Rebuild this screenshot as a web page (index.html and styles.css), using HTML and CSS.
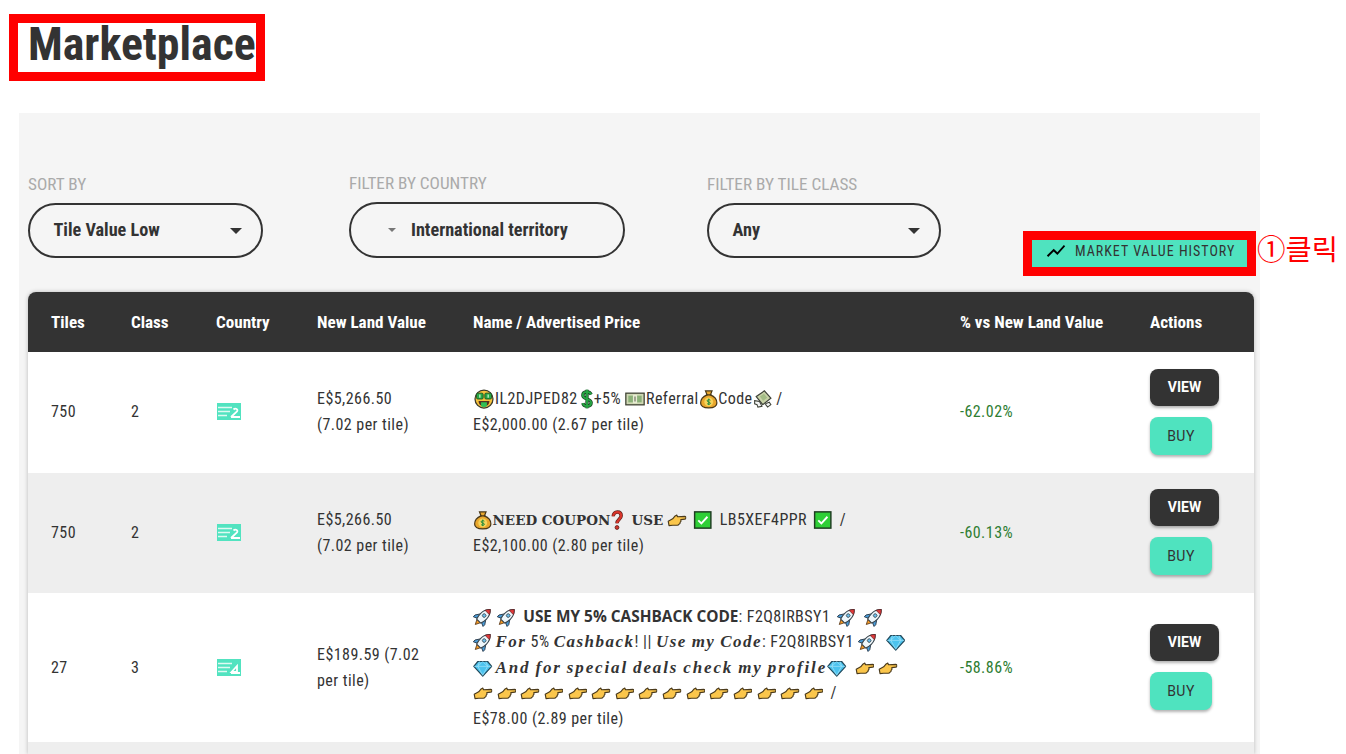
FILE: index.html
```html
<!DOCTYPE html>
<html lang="en">
<head>
<meta charset="utf-8">
<title>Marketplace</title>
<link rel="stylesheet" href="styles.css">
</head>
<body>
<svg class="defs" width="0" height="0" aria-hidden="true">
  <symbol id="flag2" viewBox="0 0 24 17"><rect width="24" height="17" fill="#52e3c0"/><path d="M1 4.500h14M1 8.500h12M1 12.500h9" stroke="#dffaf2" stroke-width="1.300"/><path d="M14 14l6-5.500c1.500-2-1.500-4-3.500-2M14 14h9" stroke="#fff" stroke-width="1.800" fill="none"/></symbol>
  <symbol id="flag3" viewBox="0 0 24 17"><rect width="24" height="17" fill="#52e3c0"/><path d="M1 4.500h14M1 8.500h12M1 12.500h9" stroke="#dffaf2" stroke-width="1.300"/><path d="M14.500 13l5.500-6v6zM14 14h9" stroke="#fff" stroke-width="1.800" fill="none"/></symbol>
  <symbol id="face" viewBox="0 0 24 24"><circle cx="12" cy="12" r="10.800" fill="#f7c23c" stroke="#3a3a2a" stroke-width="1.500"/><rect x="3" y="5" width="8" height="7" rx="1.500" fill="#27a844" stroke="#174d22"/><rect x="13" y="5" width="8" height="7" rx="1.500" fill="#27a844" stroke="#174d22"/><path d="M7 6.500v4M17 6.500v4" stroke="#bff0c8" stroke-width="1.600"/><path d="M5.500 14.500h13c0 4-3 6.500-6.500 6.500s-6.500-2.500-6.500-6.500z" fill="#54301f"/><path d="M8.500 16h7v4.500c-1 1.500-6 1.500-7 0z" fill="#2fbf55"/></symbol>
  <symbol id="dollar" viewBox="0 0 14 24"><path d="M12 6.500C11 4.500 9.500 3.500 7 3.500 4 3.500 2 5 2 7.500c0 5.500 10 3.500 10 9 0 2.500-2 4-5 4-2.500 0-4.500-1-5-3.500M7 .8v22.400" fill="none" stroke="#1b4a26" stroke-width="4"/><path d="M12 6.500C11 4.500 9.500 3.500 7 3.500 4 3.500 2 5 2 7.500c0 5.500 10 3.500 10 9 0 2.500-2 4-5 4-2.500 0-4.500-1-5-3.500M7 .8v22.400" fill="none" stroke="#27a844" stroke-width="2.200"/></symbol>
  <symbol id="note" viewBox="0 0 24 24"><rect x="1" y="5" width="22" height="14" fill="#cfd8b4" stroke="#3c4030" stroke-width="1.500"/><rect x="4" y="8" width="16" height="8" fill="#8bb178"/><rect x="9.500" y="7" width="5" height="10" fill="#e8edd4"/><path d="M12 9v6" stroke="#3c4030"/></symbol>
  <symbol id="bag" viewBox="0 0 24 24"><path d="M8 2h8l-2 5c5 2 8 6 8 10 0 4-4 6-10 6S2 21 2 17c0-4 3-8 8-10z" fill="#e9a72c" stroke="#4a3818" stroke-width="1.500"/><path d="M8.500 7h7" stroke="#4a3818" stroke-width="1.500"/><circle cx="12" cy="15.500" r="5.500" fill="#f6d35a"/><path d="M14 13.500c-1-1-4-1-4 .8s4 1 4 3c0 1.500-3 1.500-4 .4M12 11.500v8" stroke="#1f8a3c" stroke-width="1.200" fill="none"/></symbol>
  <symbol id="fly" viewBox="0 0 24 24"><path d="M4 9l10-7 8 9-10 8z" fill="#c8d2a8" stroke="#40443a" stroke-width="1.500"/><path d="M8.500 9l5-3.500 4 5-5 3.500z" fill="#a3bc86"/><path d="M2 14l6 1 3 6-5 1-1-3-3-1zM15 18l5-2 2 3-4 3z" fill="#f4f5f5" stroke="#40443a" stroke-width="1.300"/></symbol>
  <symbol id="question" viewBox="0 0 14 24"><path d="M2.500 7.500C2.500 4.500 4.500 2.500 7.500 2.500s4.500 2 4.500 4.500c0 4-5 4.500-5 9" fill="none" stroke="#5a1f1a" stroke-width="4.200"/><path d="M2.500 7.500C2.500 4.500 4.500 2.500 7.500 2.500s4.500 2 4.500 4.500c0 4-5 4.500-5 9" fill="none" stroke="#d8352a" stroke-width="2.600"/><circle cx="7" cy="21" r="2.300" fill="#d8352a" stroke="#5a1f1a"/></symbol>
  <symbol id="hand" viewBox="0 0 24 24"><path d="M1.500 13.500 7 10.500 10 7l2-1 1 2 9-.5c1.700.1 1.700 3.200 0 3.400l-5 .6c.5 1.500.3 2.600-.8 3.200.2 1.300-.4 2.200-1.500 2.500-.4 1-1.200 1.300-2.200 1.300H7l-4.500.5z" fill="#fbc64b" stroke="#4a3a1c" stroke-width="1.400" stroke-linejoin="round"/></symbol>
  <symbol id="check" viewBox="0 0 24 24"><rect x="2" y="2" width="20" height="20" fill="#2fcf37" stroke="#1f3d22" stroke-width="1.800"/><path d="M6.500 12.500l3.800 3.800 7.500-8.300" fill="none" stroke="#fff" stroke-width="2.300"/></symbol>
  <symbol id="rocket" viewBox="0 0 24 24"><g transform="rotate(45 12 12)"><path d="M9 19h6l-3 6z" fill="#f49a25" stroke="#5a3a1c"/><path d="M7.500 11 3.500 17v3l4.500-2zM16.500 11l4 6v3L16 18z" fill="#4a9fdc" stroke="#2a3a4a" stroke-width="1.100"/><path d="M12-1c3.500 3 5 7 5 11.500 0 3-.5 6-1.500 8.500h-7C7.500 16.500 7 13.500 7 10.500 7 6 8.500 2 12-1z" fill="#eef7fc" stroke="#3a464e" stroke-width="1.300"/><path d="M12-1c1.800 1.500 3 3.300 3.800 5.200H8.200C9 2.300 10.200.500 12-1z" fill="#e2393a" stroke="#5a2020" stroke-width=".8"/><circle cx="12" cy="9.500" r="2.200" fill="#6cc0ee" stroke="#3a464e"/></g></symbol>
  <symbol id="gem" viewBox="0 0 24 24"><path d="M6 4h12l5 6-11 12L1 10z" fill="#4cc3ee" stroke="#234a5c" stroke-width="1.500" stroke-linejoin="round"/><path d="M1.500 10h21M8 4l-2 6 6 11 6-11-2-6M12 4l-6 6M12 4l6 6" stroke="#a8e6fa" stroke-width=".8" fill="none"/></symbol>
</svg>

<h1 class="title">Marketplace</h1>
<section class="panel">
  <div class="filters">
    <div class="filter f-sort">
      <label>SORT BY</label>
      <div class="select"><span>Tile Value Low</span><i class="caret"></i></div>
    </div>
    <div class="filter f-country">
      <label>FILTER BY COUNTRY</label>
      <div class="select"><i class="caret small"></i><span>International territory</span></div>
    </div>
    <div class="filter f-class">
      <label>FILTER BY TILE CLASS</label>
      <div class="select"><span>Any</span><i class="caret"></i></div>
    </div>
    <div class="history-wrap">
      <a class="history"><svg viewBox="0 0 24 24"><path d="M3.500 18.490l6-6.010 4 4L22 6.920l-1.410-1.410-7.090 7.970-4-4L2 16.990z"/></svg>MARKET VALUE HISTORY</a>
      <span class="note">①클릭</span>
    </div>
  </div>
  <table class="market">
    <thead>
      <tr><th>Tiles</th><th>Class</th><th>Country</th><th>New Land Value</th><th>Name / Advertised Price</th><th>% vs New Land Value</th><th>Actions</th></tr>
    </thead>
    <tbody>
      <tr class="r1">
        <td>750</td><td>2</td>
        <td><svg class="flag"><use href="#flag2"/></svg></td>
        <td>E$5,266.50<br>(7.02 per tile)</td>
        <td><svg class="e wide"><use href="#face"/></svg>IL2DJPED82<svg class="e narrow gap2"><use href="#dollar"/></svg>+5%<svg class="e wide gap3"><use href="#note"/></svg>Referral<svg class="e"><use href="#bag"/></svg>Code<svg class="e"><use href="#fly"/></svg> /<br>E$2,000.00 (2.67 per tile)</td>
        <td class="pct">-62.02%</td>
        <td class="acts"><a class="btn view">VIEW</a><a class="btn buy">BUY</a></td>
      </tr>
      <tr class="r2">
        <td>750</td><td>2</td>
        <td><svg class="flag"><use href="#flag2"/></svg></td>
        <td>E$5,266.50<br>(7.02 per tile)</td>
        <td><svg class="e"><use href="#bag"/></svg><b class="serif">NEED COUPON</b><svg class="e narrow lead"><use href="#question"/></svg> <b class="serif">USE</b> <svg class="e"><use href="#hand"/></svg> <svg class="e boxed"><use href="#check"/></svg> LB5XEF4PPR <svg class="e boxed"><use href="#check"/></svg> /<br>E$2,100.00 (2.80 per tile)</td>
        <td class="pct">-60.13%</td>
        <td class="acts"><a class="btn view">VIEW</a><a class="btn buy">BUY</a></td>
      </tr>
      <tr class="r3">
        <td>27</td><td>3</td>
        <td><svg class="flag"><use href="#flag3"/></svg></td>
        <td>E$189.59 (7.02<br>per tile)</td>
        <td><svg class="e"><use href="#rocket"/></svg> <svg class="e lead"><use href="#rocket"/></svg> <b class="sans">USE MY 5% CASHBACK CODE</b>: F2Q8IRBSY1 <svg class="e gap3"><use href="#rocket"/></svg> <svg class="e gap3"><use href="#rocket"/></svg><br><svg class="e lead"><use href="#rocket"/></svg><b class="ital">For</b> 5% <b class="ital">Cashback</b>! || <b class="ital">Use my Code</b>: F2Q8IRBSY1 <svg class="e"><use href="#rocket"/></svg> <svg class="e gap4"><use href="#gem"/></svg><br><svg class="e lead"><use href="#gem"/></svg><b class="ital long">And for special deals check my profile</b><svg class="e"><use href="#gem"/></svg> <svg class="e gap4"><use href="#hand"/></svg> <svg class="e"><use href="#hand"/></svg><br><svg class="e"><use href="#hand"/></svg> <svg class="e"><use href="#hand"/></svg> <svg class="e"><use href="#hand"/></svg> <svg class="e"><use href="#hand"/></svg> <svg class="e"><use href="#hand"/></svg> <svg class="e"><use href="#hand"/></svg> <svg class="e"><use href="#hand"/></svg> <svg class="e"><use href="#hand"/></svg> <svg class="e"><use href="#hand"/></svg> <svg class="e"><use href="#hand"/></svg> <svg class="e"><use href="#hand"/></svg> <svg class="e"><use href="#hand"/></svg> <svg class="e"><use href="#hand"/></svg> <svg class="e"><use href="#hand"/></svg> <svg class="e"><use href="#hand"/></svg> <span class="slash">/</span><br>E$78.00 (2.89 per tile)</td>
        <td class="pct">-58.86%</td>
        <td class="acts"><a class="btn view">VIEW</a><a class="btn buy">BUY</a></td>
      </tr>
      <tr class="r4"><td colspan="7"></td></tr>
    </tbody>
  </table>
</section>
</body>
</html>
```

FILE: styles.css
```css
* { box-sizing: border-box; }
html, body { margin: 0; height: 754px; overflow: hidden; background: #fff; }
body { font-family: Roboto, sans-serif; color: #333; font-size: 16px; }
.defs { position: absolute; }
.title {
  display: block; margin: 14px 0 32px 9px; padding: 0 0 0 10px;
  width: 256px; height: 67px; border: 9px solid #f00;
  font-size: 45.800px; line-height: 44px; font-weight: 700; color: #333;
  font-stretch: 75%; white-space: nowrap;
}
.panel { margin-left: 19px; width: 1241px; height: 641px; background: #f5f5f5; padding: 0 6px 0 9px; }
.filters { display: flex; height: 179px; padding-top: 61px; }
.filter { flex: none; }
.filter label { display: block; color: #aaa; font-size: 17.200px; line-height: 20px; margin-bottom: 9px; font-stretch: 75%; }
.f-sort { width: 321px; } .f-country { width: 358px; margin-top: -1px; } .f-class { width: 234px; }
.f-sort .select { width: 235px; } .f-country .select { width: 276px; height: 56px; } .f-class .select { width: 234px; }
.select {
  height: 55px; border: 2.500px solid #333; border-radius: 28px; display: flex; align-items: center;
  justify-content: space-between; padding: 0 19px 2px 23.500px; font-weight: 700; font-size: 18.200px; font-stretch: 75%; color: #333;
}
.f-country .select { justify-content: flex-start; gap: 15px; padding-left: 37px; }
.caret { width: 0; height: 0; margin-top: 2px; border: 6px solid transparent; border-top: 6px solid #333; border-bottom: 0; }
.caret.small { border-width: 4px 4px 0; border-top-color: #777; }
.history-wrap { flex: none; position: relative; margin: 57px 0 0 82px; align-self: flex-start; }
.history {
  display: flex; align-items: center; gap: 8px; width: 233px; height: 45px; border: 9px solid #f00;
  background: #4fe3bf; padding: 0 0 5px 13px; font-size: 14px; letter-spacing: 1px; color: #333; font-stretch: 75%; white-space: nowrap;
}
.history svg { flex: none; width: 22px; height: 22px; }
.note { position: absolute; left: 234px; top: -1px; color: #f00; font-size: 28.500px; line-height: 36px; font-family: "Noto Sans CJK KR", sans-serif; white-space: nowrap; }
.market { width: 1226px; border-collapse: separate; border-spacing: 0; table-layout: fixed; box-shadow: 0 0 4px rgba(0,0,0,.25); border-radius: 8px 8px 0 0; }
.market th, .market td { padding: 0 0 0 23px; text-align: left; vertical-align: middle; }
.market th { background: #333; color: #fff; height: 60px; font-size: 17.100px; font-weight: 700; font-stretch: 75%; }
.market th:first-child { border-top-left-radius: 8px; } .market th:last-child { border-top-right-radius: 8px; }
.market th:nth-child(1) { width: 80px; } .market th:nth-child(2) { width: 85px; } .market th:nth-child(3) { width: 101px; }
.market th:nth-child(4) { width: 156px; } .market th:nth-child(5) { width: 487px; } .market th:nth-child(6) { width: 190px; } .market th:nth-child(7) { width: 127px; }
.market td { line-height: 25.500px; font-size: 16px; font-stretch: 78%; letter-spacing: .45px; color: #333; }
.r1 td, .r3 td { background: #fff; } .r2 td, .r4 td { background: #eee; }
.market .r1 td, .market .r3 .acts { padding-bottom: 2px; }
.market .r2 td { padding-bottom: 1px; }
.market .r2 .acts { padding-bottom: 3px; }
.r1 { height: 121px; } .r2 { height: 120px; } .r3 { height: 149px; } .r4 { height: 12px; }
.market .pct { color: #2e7d32; }
.flag { width: 24px; height: 17px; display: block; margin-left: 1px; }
.e { width: 19.500px; height: 20px; vertical-align: -5px; display: inline-block; }
.e.wide { width: 22px; }
.e.narrow { width: 14px; }
.e.gap2 { margin-left: 2px; }
.e.gap3 { margin-left: 3px; }
.e.gap4 { margin-left: 4px; }
.e.lead { margin-right: 3px; }
.e.boxed { margin: 0 3px 0 2px; }
.slash { margin-left: 3px; }
.serif { font-family: "DejaVu Serif", serif; font-size: 13.500px; letter-spacing: 0; font-stretch: 100%; }
.sans { font-family: "Open Sans", sans-serif; font-size: 15.400px; letter-spacing: 0; font-stretch: 100%; }
.ital { font-family: "Liberation Serif", serif; font-style: italic; font-size: 17px; letter-spacing: 1.500px; word-spacing: -1px; font-stretch: 100%; }
.ital.long { letter-spacing: 1.850px; }
.btn { display: flex; align-items: center; justify-content: center; border-radius: 8px; font-size: 14px; line-height: 1; letter-spacing: .5px; font-stretch: 100%; box-shadow: 0 2px 3px rgba(0,0,0,.3); }
.view { width: 69px; height: 37px; background: #333; color: #fff; font-weight: 700; margin-bottom: 11px; letter-spacing: 0; }
.buy { width: 62px; height: 38px; background: #4fe3bf; color: #333; }
```
